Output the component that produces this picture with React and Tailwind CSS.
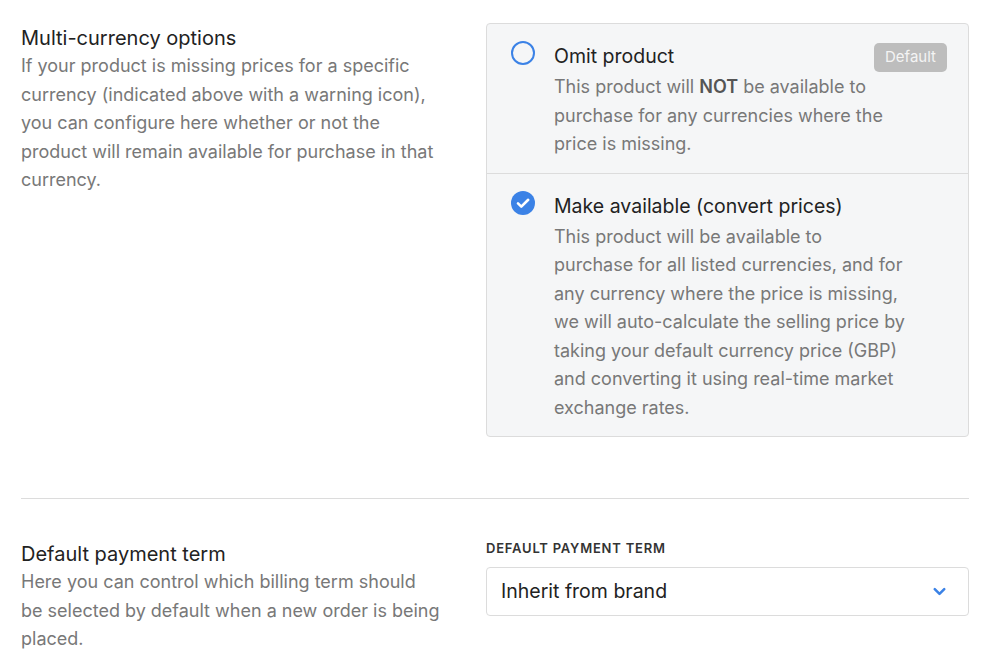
import { ChevronDown } from 'lucide-react'

const fontStack = { fontFamily: 'Inter, "Noto Sans", sans-serif' }

const OptionRow = ({ checked, title, children, badge, last }) => (
  <div className={`flex gap-[19px] pl-6 pr-[21px] pt-4 pb-[14px] ${last ? '' : 'border-b border-[#dcdcdc]'}`}>
    <div className="pt-[1px] shrink-0">
      {checked ? (
        <svg width="24" height="24" viewBox="0 0 24 24">
          <circle cx="12" cy="12" r="12" fill="#3b82e6" />
          <path d="M7 12.4l3.3 3.2L17.2 8.8" stroke="#fff" strokeWidth="2.6" fill="none" strokeLinecap="round" strokeLinejoin="round" />
        </svg>
      ) : (
        <svg width="24" height="24" viewBox="0 0 24 24">
          <circle cx="12" cy="12" r="11" fill="none" stroke="#3b82e6" strokeWidth="2" />
        </svg>
      )}
    </div>
    <div className="flex-1">
      <div className="flex justify-between items-start">
        <div className="text-[19.5px] leading-[33px] text-[#222]">{title}</div>
        {badge && (
          <span className="mt-[3px] px-[11px] h-[29px] flex items-center rounded-[5px] bg-[#bdbdbd] text-[#f4f4f4] text-[15px]">{badge}</span>
        )}
      </div>
      <p className="text-[18px] leading-[28.5px] text-[#787878] whitespace-nowrap">{children}</p>
    </div>
  </div>
)

const App = () => {
  return (
    <div className="bg-white min-h-screen px-[21px] pt-[23px]" style={fontStack}>
      <div className="flex justify-between">
        <div className="w-[440px] pt-[1px]">
          <h2 className="text-[20px] leading-[28px] text-[#222]">Multi-currency options</h2>
          <p className="text-[18px] leading-[28.5px] text-[#787878] whitespace-nowrap">
            If your product is missing prices for a specific<br />
            currency (indicated above with a warning icon),<br />
            you can configure here whether or not the<br />
            product will remain available for purchase in that<br />
            currency.
          </p>
        </div>
        <div className="w-[483px] border border-[#dcdcdc] rounded-[4px] bg-[#f5f6f7]">
          <OptionRow title="Omit product" badge="Default">
            This product will <span className="font-semibold text-[#555]">NOT</span> be available to<br />
            purchase for any currencies where the<br />
            price is missing.
          </OptionRow>
          <OptionRow checked title="Make available (convert prices)" last>
            This product will be available to<br />
            purchase for all listed currencies, and for<br />
            any currency where the price is missing,<br />
            we will auto-calculate the selling price by<br />
            taking your default currency price (GBP)<br />
            and converting it using real-time market<br />
            exchange rates.
          </OptionRow>
        </div>
      </div>

      <div className="border-t border-[#dcdcdc] mt-[61px]" />

      <div className="flex justify-between pt-[41px]">
        <div className="w-[440px]">
          <h2 className="text-[20px] leading-[28px] text-[#222]">Default payment term</h2>
          <p className="text-[18px] leading-[28.5px] text-[#787878] whitespace-nowrap">
            Here you can control which billing term should<br />
            be selected by default when a new order is being<br />
            placed.
          </p>
        </div>
        <div className="w-[483px]">
          <label className="block text-[13px] font-semibold tracking-[0.06em] text-[#333] leading-[16px]">DEFAULT PAYMENT TERM</label>
          <div className="mt-[11px] h-[49px] border border-[#dcdcdc] rounded-[4px] bg-white flex items-center justify-between pl-[14px] pr-[19px]">
            <span className="text-[19.5px] text-[#222]">Inherit from brand</span>
            <ChevronDown size={19} strokeWidth={3.2} color="#3b82e6" />
          </div>
        </div>
      </div>
    </div>
  )
}

export default App
